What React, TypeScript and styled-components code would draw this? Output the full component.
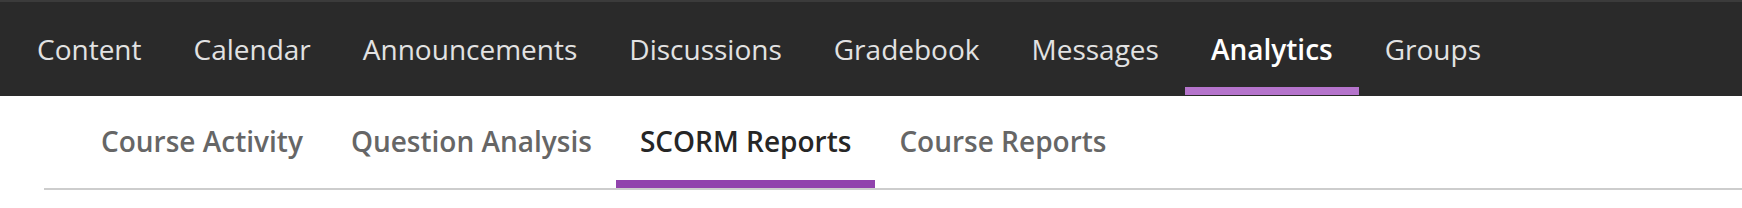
import styled, { createGlobalStyle } from 'styled-components';

const GlobalStyle = createGlobalStyle`
  html, body {
    margin: 0;
    padding: 0;
    background: #ffffff;
    font-family: 'Open Sans', 'Liberation Sans', sans-serif;
  }
`;

const mainTabs = ['Content', 'Calendar', 'Announcements', 'Discussions', 'Gradebook', 'Messages', 'Analytics', 'Groups'];
const subTabs = ['Course Activity', 'Question Analysis', 'SCORM Reports', 'Course Reports'];

export default function App() {
  return (
    <>
      <GlobalStyle />
      <Page>
        <TopNav>
          {mainTabs.map((tab) => (
            <TopTab key={tab} $active={tab === 'Analytics'}>{tab}</TopTab>
          ))}
        </TopNav>

        <SubNav>
          {subTabs.map((tab) => (
            <SubTab key={tab} $active={tab === 'SCORM Reports'}>{tab}</SubTab>
          ))}
        </SubNav>
      </Page>
    </>
  );
}

const Page = styled.div`
  width: 1742px;
  height: 208px;
  background: #ffffff;
`;

const TopNav = styled.nav`
  display: flex;
  align-items: flex-start;
  height: 94px;
  padding-left: 11px;
  border-top: 2px solid #3b3b3b;
  background: #2a2a2a;
`;

const TopTab = styled.a<{ $active?: boolean }>`
  display: block;
  padding: 28px 26px 19px;
  font-size: 28px;
  line-height: 38px;
  font-weight: ${({ $active }) => ($active ? 600 : 400)};
  color: ${({ $active }) => ($active ? '#ffffff' : '#e2e2e2')};
  border-bottom: 8px solid ${({ $active }) => ($active ? '#b574cc' : 'transparent')};
  white-space: nowrap;
  cursor: pointer;
`;

const SubNav = styled.nav`
  display: flex;
  align-items: flex-end;
  height: 92px;
  margin-left: 44px;
  padding-left: 33px;
  border-bottom: 2px solid #cdcdcd;
`;

const SubTab = styled.a<{ $active?: boolean }>`
  display: block;
  padding: 26px 24px 20px;
  font-size: 28px;
  line-height: 38px;
  font-weight: 600;
  color: ${({ $active }) => ($active ? '#262626' : '#666666')};
  border-bottom: 8px solid ${({ $active }) => ($active ? '#9143ad' : 'transparent')};
  white-space: nowrap;
  cursor: pointer;
`;
